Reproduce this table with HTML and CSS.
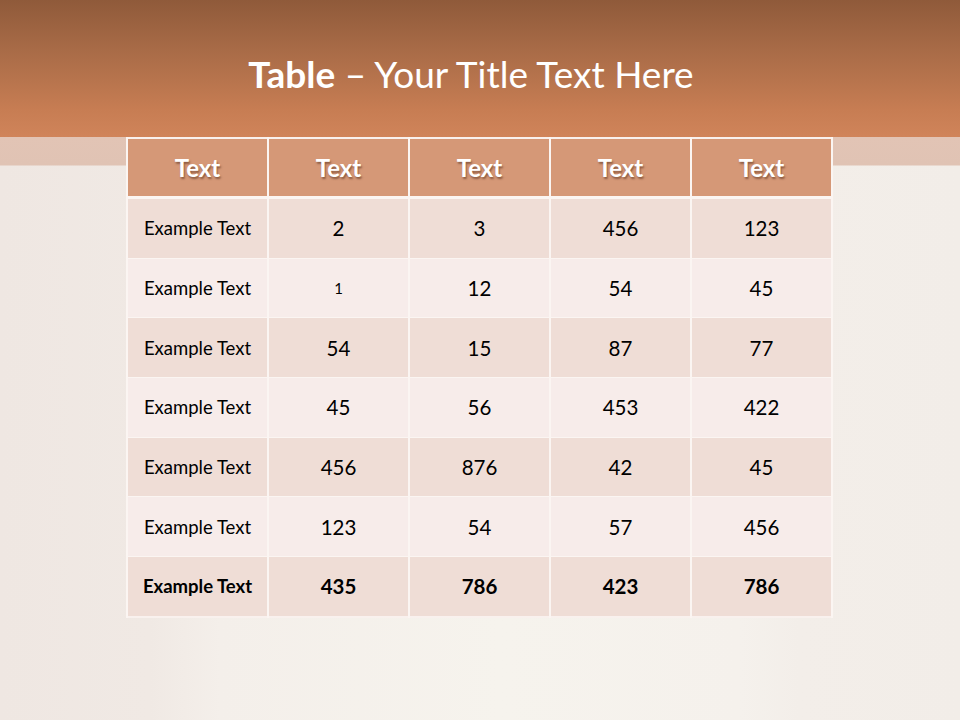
FILE: index.html
```html
<!DOCTYPE html>
<html>
<head>
<meta charset="utf-8">
<link rel="stylesheet" href="styles.css">
</head>
<body>
<div class="slide">
  <header class="title-bar">
    <h1 class="title"><b>Table</b> – Your Title Text Here</h1>
  </header>
  <div class="table-wrap">
    <table class="data">
      <thead>
        <tr><th>Text</th><th>Text</th><th>Text</th><th>Text</th><th>Text</th></tr>
      </thead>
      <tbody>
        <tr class="odd"><td class="label">Example Text</td><td>2</td><td>3</td><td>456</td><td>123</td></tr>
        <tr class="even"><td class="label">Example Text</td><td class="small">1</td><td>12</td><td>54</td><td>45</td></tr>
        <tr class="odd"><td class="label">Example Text</td><td>54</td><td>15</td><td>87</td><td>77</td></tr>
        <tr class="even"><td class="label">Example Text</td><td>45</td><td>56</td><td>453</td><td>422</td></tr>
        <tr class="odd"><td class="label">Example Text</td><td>456</td><td>876</td><td>42</td><td>45</td></tr>
        <tr class="even"><td class="label">Example Text</td><td>123</td><td>54</td><td>57</td><td>456</td></tr>
        <tr class="odd total"><td class="label">Example Text</td><td>435</td><td>786</td><td>423</td><td>786</td></tr>
      </tbody>
    </table>
  </div>
</div>
</body>
</html>
```

FILE: styles.css
```css
html, body {
  margin: 0;
  padding: 0;
}
body {
  width: 960px;
  height: 720px;
  overflow: hidden;
  font-family: "Lato", "Open Sans", sans-serif;
}
.slide {
  width: 960px;
  height: 720px;
  background:
    linear-gradient(to bottom, #8f5a3a 0px, #a86b47 50px, #c77d53 110px, #d0845a 137px, transparent 137px),
    linear-gradient(to bottom, transparent 137px, #e2c4b5 137px, #e0c3b4 165px, transparent 166px),
    linear-gradient(to right, #efe7e2 0px, #f0e9e4 150px, #f4efea 220px, #f6f3ed 500px, #f5f1ec 740px, #f3eee9 800px, #f2ede8 960px);
}
.title-bar {
  height: 137px;
  display: flex;
  align-items: center;
  justify-content: center;
  padding-right: 18px;
}
.title {
  margin: 0;
  padding-top: 10px;
  font-weight: 400;
  font-size: 37px;
  color: #ffffff;
  letter-spacing: 0;
}
.title b {
  font-weight: 700;
}
.table-wrap {
  padding-left: 126px;
}
.data {
  border-collapse: collapse;
  background: #f9f1ee;
  border: 2px solid #f9f1ee;
}
.data th, .data td {
  width: 139px;
  text-align: center;
  border-left: 2px solid #fbf5f2;
  border-right: 2px solid #fbf5f2;
  padding: 0;
}
.data th {
  height: 57px;
  background: #d59877;
  color: #ffffff;
  font-size: 24px;
  font-weight: 700;
  text-shadow: 1px 2px 2px rgba(80, 40, 20, 0.55);
  border-bottom: 3px solid #fbf5f2;
}
.data td {
  height: 58.7px;
  font-size: 20.5px;
  color: #000000;
  border-bottom: 1px solid #fbf5f2;
}
.data td.label {
  font-size: 18.5px;
}
.data td.small {
  font-size: 15px;
}
.data tr.odd td {
  background: #efddd6;
}
.data tr.even td {
  background: #f7ecea;
}
.data tr.total td {
  font-weight: 700;
}
```
